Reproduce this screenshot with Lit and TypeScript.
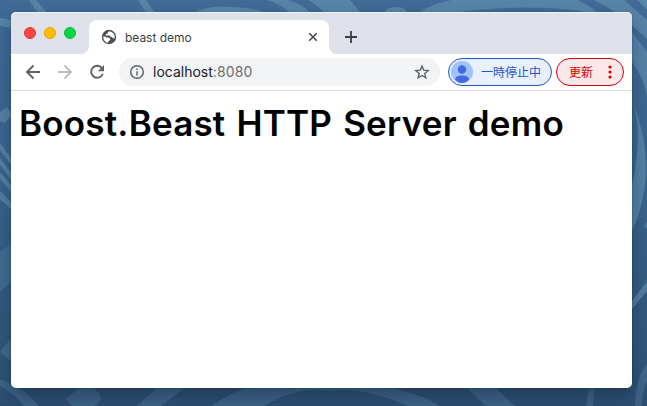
import { LitElement, html, css, svg } from "lit";
import { customElement } from "lit/decorators.js";

@customElement("app-root")
export class AppRoot extends LitElement {
  static styles = css`
    :host { display: block; position: relative; box-sizing: border-box; width: 647px; height: 406px; padding: 12px 15px 18px 11px; overflow: hidden; font-family: Inter, "Noto Sans CJK JP", sans-serif; }
    * { box-sizing: border-box; }
    svg { display: block; flex: none; }
    .wallpaper { position: absolute; inset: 0; }
    .window { position: relative; width: 621px; height: 376px; display: flex; flex-direction: column; border-radius: 5px; overflow: hidden; background: #fff; box-shadow: 0 0 1px rgba(0,0,0,.6); }
    .shade { position: absolute; left: 11px; top: 12px; width: 621px; height: 376px; border-radius: 5px; box-shadow: 0 8px 16px rgba(8,24,44,.35); }
    .tabs { height: 42px; flex: none; display: flex; background: #dee1e9; border-top: 1px solid #f3f4f7; }
    .lights { width: 78px; display: flex; gap: 8px; padding: 14px 0 0 13px; background: #dee1e9; border-bottom-right-radius: 8px; }
    .light { width: 12px; height: 12px; border-radius: 50%; border: 1px solid; }
    .red { background: #ff4543; border-color: #e03638; }
    .amber { background: #ffbd00; border-color: #e2a302; }
    .green { background: #00d742; border-color: #0cbb3a; }
    .strip { display: flex; flex: 1; background: linear-gradient(#dee1e9 0 20px, #fff 20px); }
    .tab { width: 240px; margin-top: 7px; display: flex; align-items: center; background: #fff; border-radius: 8px 8px 0 0; padding: 0 11px 0 12px; font-size: 12px; color: #3c4043; }
    .tab span { flex: 1; margin-left: 8px; letter-spacing: -.03px; }
    .rest { flex: 1; background: #dee1e9; border-bottom-left-radius: 8px; padding: 18px 0 0 16px; }
    .bar { height: 37px; flex: none; display: flex; align-items: center; border-bottom: 1px solid #dadce0; padding: 0 8px 0 14px; }
    .nav { display: flex; gap: 16px; width: 94px; }
    .address { width: 321px; height: 28px; border-radius: 14px; background: #f1f3f4; display: flex; align-items: center; padding: 0 10px; font-size: 14px; color: #202124; }
    .address span { flex: 1; margin: -1px 0 0 8px; }
    .address b { font-weight: 400; color: #6b6f73; letter-spacing: .1px; }
    .chip { height: 28px; display: flex; align-items: center; border: 1px solid; border-radius: 14px; font: 12px/18px "Noto Sans CJK JP", sans-serif; white-space: nowrap; }
    .chip span { margin-top: -1px; }
    .paused { width: 104px; margin-left: 8px; padding-left: 2px; gap: 8px; color: #1b58d0; background: #e8f0fe; }
    .update { width: 68px; margin-left: 4px; padding: 0 11px 0 12px; justify-content: space-between; color: #d90000; background: #fce8e8; }
    h1 { margin: 8px 0 0 8px; font: 600 35px/48px Inter, sans-serif; letter-spacing: .2px; word-spacing: 2px; color: #000; white-space: nowrap; }
  `;

  private wallpaper() {
    return svg`
      <defs>
        <linearGradient id="base" x2="0" y2="1"><stop offset="0" stop-color="#406a97"/><stop offset=".5" stop-color="#38618a"/><stop offset=".88" stop-color="#305478"/><stop offset="1" stop-color="#2c4d70"/></linearGradient>
        <pattern id="weave" width="4" height="4" patternUnits="userSpaceOnUse"><path d="M0 .5h2M2 2.5h2" stroke="#fff" stroke-opacity=".025"/><path d="M1.5 1v2" stroke="#000" stroke-opacity=".03"/></pattern>
      </defs>
      <rect width="647" height="406" fill="url(#base)"/>
      <g fill="#6899b7" fill-opacity=".55">
        <path d="M0 18l12 2v8L0 26zM29 0h7l11 13h-9zM138 0h8l9 13h-9z"/>
        <path d="M193 13q16-8 36-6q22 0 36 6zM267 0h21q17 5 22 13h-20q-8-8-23-13zM308 0h42l11 13h-37q-5-7-16-13z"/>
        <path d="M384 13q2-6 13-6 11 1 9 6zM418 13q18-11 34-13h126q24 12 54 43v26q-30-48-52-58-56-8-127 2z"/>
        <path d="M594 0h30l23 20v19Q620 12 594 0zM637 0h10v9z"/>
        <path d="M632 62q12 16 15 34V52l-15-20zM632 99q9 24 4 62-1 13-4 25v45q12-24 14-58 1-35-14-74z"/>
        <path d="M644 227l3-5v6z"/>
        <path d="M0 112l7-5 5 8-7 8-5-2zM0 143l12 16v7L0 150zM0 158l12 16v7L0 165zM0 172l12 14v7L0 179zM0 191l12 12v7L0 199z"/>
        <path d="M0 252l12-9v38L0 292z" fill-opacity=".25"/>
        <path d="M0 352l12-15v25z" fill-opacity=".3"/>
        <path d="M632 301l15-20v10l-15 18z"/>
      </g>
      <g fill="#6899b7" fill-opacity=".27">
        <path d="M0 379q22 7 39 27H24Q14 393 0 386zM66 399l12-10q18-6 23 9-2 7-8 8H72zM137 406l20-18h27l-23 18z"/>
        <path d="M211 406q21-14 37-18h142q31 6 50 18h-32q-45-20-78-15-33-5-66 15zM467 388h29l19 18h-29zM589 388h6l-2 18h-7zM635 406q1-31 12-42v17q-5 11-5 25z"/>
      </g>
      <rect width="647" height="406" fill="url(#weave)"/>`;
  }

  render() {
    return html`
      <svg class="wallpaper" width="647" height="406" viewBox="0 0 647 406">${this.wallpaper()}</svg>
      <div class="shade"></div>
      <div class="window">
        <div class="tabs">
          <div class="strip">
            <div class="lights"><i class="light red"></i><i class="light amber"></i><i class="light green"></i></div>
            <div class="tab">
              <svg width="16" height="16" viewBox="0 0 16 16"><circle cx="8" cy="8" r="7.2" fill="#4b5054"/><path d="M8.2 2.2L6.5 3.7V5H4.8v1.5h4l1 1.4h1.4l.4 1.2 1.9.3A5.8 5.8 0 0 0 8.2 2.2zM2.2 7.6a5.800 5.800 0 0 0 5 6.100v-1.200l2-1.400V9.700L7.800 8.600H5.300L4.200 7.500z" fill="#fff"/></svg>
              <span>beast demo</span>
              <svg width="10" height="10" viewBox="0 0 10 10"><path d="M1.200 1.200l7.600 7.600M8.800 1.200L1.200 8.800" stroke="#44474b" stroke-width="1.500"/></svg>
            </div>
            <div class="rest"><svg width="12" height="12" viewBox="0 0 12 12"><path d="M6 0v12M0 6h12" stroke="#393c41" stroke-width="1.800"/></svg></div>
          </div>
        </div>
        <div class="bar">
          <div class="nav">
            <svg width="16" height="16" viewBox="0 0 16 16" fill="none" stroke="#5f6368" stroke-width="1.900"><path d="M15 8H2.500M8.500 1.500L2 8l6.500 6.500"/></svg>
            <svg width="16" height="16" viewBox="0 0 16 16" fill="none" stroke="#babcbe" stroke-width="1.900"><path d="M1 8h12.500M7.500 1.500L14 8l-6.500 6.500"/></svg>
            <svg width="16" height="16" viewBox="0 0 16 16"><path d="M13.200 4.500A6 6 0 1 0 13.800 9.800" fill="none" stroke="#5f6368" stroke-width="1.900"/><path d="M15 1v6.200H8.800z" fill="#5f6368"/></svg>
          </div>
          <div class="address">
            <svg width="16" height="16" viewBox="0 0 16 16" fill="none" stroke="#5f6368" stroke-width="1.500"><circle cx="8" cy="8" r="6.300"/><path d="M8 7.200v4.200M8 4.400v1.600"/></svg>
            <span>localhost<b>:8080</b></span>
            <svg width="16" height="16" viewBox="0 0 16 16"><path d="M8 2l1.700 4.100 4.500.400-3.400 2.900 1 4.400L8 11.500l-3.800 2.300 1-4.400-3.400-2.900 4.500-.4z" fill="none" stroke="#5f6368" stroke-width="1.400"/></svg>
          </div>
          <div class="chip paused">
            <svg width="22" height="22" viewBox="0 0 22 22"><circle cx="11" cy="11" r="11" fill="#a0c3ff"/><circle cx="11" cy="8.500" r="4.200" fill="#4169e1"/><path d="M4 18.500C4 13 18 13 18 18.500Q15 22 11 22t-7-3.500z" fill="#4169e1"/></svg>
            <span>一時停止中</span>
          </div>
          <div class="chip update"><span>更新</span><svg width="4" height="14" viewBox="0 0 4 14" fill="#d90000"><circle cx="2" cy="2" r="1.600"/><circle cx="2" cy="7" r="1.600"/><circle cx="2" cy="12" r="1.600"/></svg></div>
        </div>
        <h1>Boost.Beast HTTP Server demo</h1>
      </div>`;
  }
}
